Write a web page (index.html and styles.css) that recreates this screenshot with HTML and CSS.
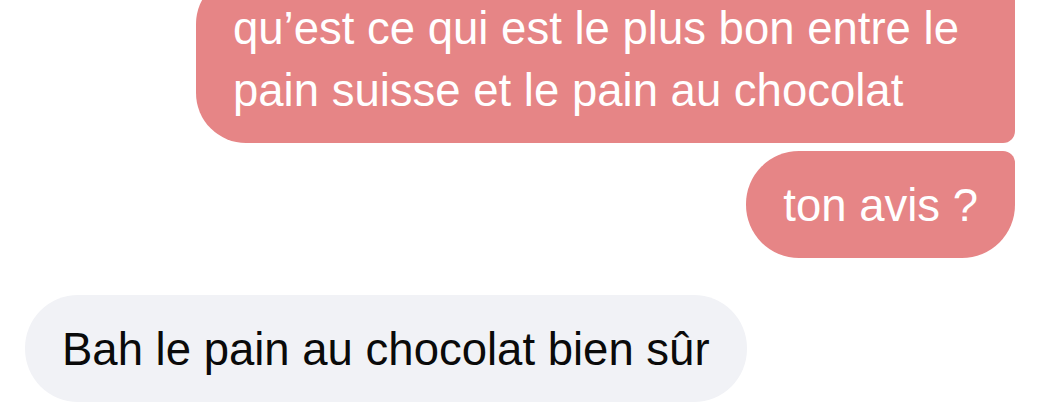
FILE: index.html
```html
<!DOCTYPE html>
<html lang="fr">
<head>
<meta charset="utf-8">
<link rel="stylesheet" href="styles.css">
</head>
<body>
<div class="thread">
  <div class="row out">
    <div class="bubble sent first">qu’est ce qui est le plus bon entre le pain suisse et le pain au chocolat</div>
  </div>
  <div class="row out">
    <div class="bubble sent last">ton avis ?</div>
  </div>
  <div class="row in">
    <div class="bubble received">Bah le pain au chocolat bien sûr</div>
  </div>
</div>
</body>
</html>
```

FILE: styles.css
```css
html, body {
  margin: 0;
  padding: 0;
  background: #ffffff;
}
body {
  width: 1039px;
  height: 405px;
  overflow: hidden;
  font-family: "Liberation Sans", Arial, sans-serif;
}
.thread {
  display: flex;
  flex-direction: column;
  margin-top: -26px;
  padding: 0 24px 0 25px;
}
.row {
  display: flex;
}
.row.out {
  justify-content: flex-end;
}
.row.in {
  justify-content: flex-start;
  margin-top: 37px;
}
.row.out + .row.out {
  margin-top: 8px;
}
.bubble {
  font-size: 45.5px;
  line-height: 62px;
  padding: 24px 37px 21px 37px;
  box-sizing: border-box;
}
.sent {
  background: #e68586;
  color: #ffffff;
}
.sent.first {
  width: 819px;
  border-radius: 50px 12px 12px 50px;
}
.sent.last {
  border-radius: 53px 12px 53px 53px;
  height: 107px;
}
.received {
  background: #f1f2f6;
  color: #0a0a0a;
  border-radius: 53px;
  height: 107px;
}
```
